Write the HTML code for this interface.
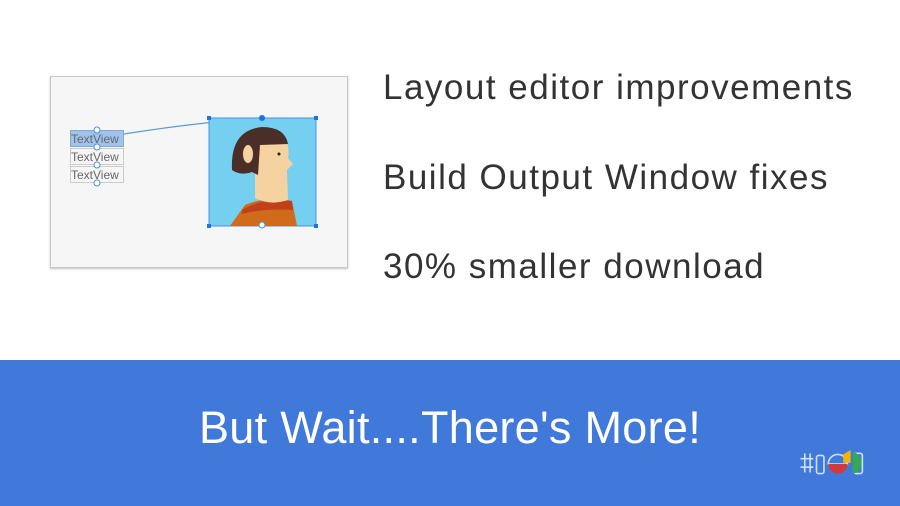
<!DOCTYPE html>
<html><head><style>
html,body{margin:0;padding:0;}
body{width:900px;height:506px;background:#fff;position:relative;overflow:hidden;font-family:"Liberation Sans",sans-serif;}
.card{position:absolute;left:50px;top:76px;width:296px;height:190px;background:#f5f6f5;border:1px solid #c8c8c8;box-shadow:0 1px 2px rgba(0,0,0,.25);}
.t{position:absolute;left:383px;font-size:35px;color:#333;white-space:nowrap;letter-spacing:1.5px;}
.band{position:absolute;left:0;top:360px;width:900px;height:146px;background:#4179db;}
.tv{position:absolute;left:70px;width:54px;height:17px;font-size:12px;color:#666;border:1px solid #ccc;line-height:17px;box-sizing:border-box;}
</style></head><body>
<div class="card"></div>
<div class="tv" style="top:130px;background:#9fc3ef;border-color:#8ab;">TextView</div>
<div class="tv" style="top:148px;">TextView</div>
<div class="tv" style="top:166px;">TextView</div>
<svg style="position:absolute;left:0;top:0" width="900" height="360">
<path d="M124 134 Q200 122 262 118" stroke="#5b9bd5" stroke-width="1.2" fill="none"/>
<rect x="209" y="118" width="107" height="108" fill="#75cff0" stroke="#4a90e2" stroke-width="1"/>
<path d="M230 226 L245 205 Q265 196 292 201 L297 226 Z" fill="#cf6b1a"/>
<path d="M242 210 Q265 196 292 201 L293 210 Q265 208 242 214 Z" fill="#c1401a"/>
<path d="M255 140 L285 136 Q290 150 288 158 L293 164 L287 170 L288 200 Q270 206 255 198 L255 175 Z" fill="#f5d3a1"/>
<path d="M232 170 Q230 130 262 127 Q285 127 288 144 L260 145 L258 175 L252 172 Q240 176 232 170 Z" fill="#4a2e28"/>
<ellipse cx="248" cy="154" rx="5" ry="9" fill="#f5d3a1"/>
<circle cx="279" cy="154" r="1.5" fill="#222"/>
<g fill="#1a73e8"><rect x="207" y="116" width="4" height="4"/><rect x="314" y="116" width="4" height="4"/><rect x="207" y="224" width="4" height="4"/><rect x="314" y="224" width="4" height="4"/><circle cx="262" cy="118" r="3"/></g>
<circle cx="262" cy="225" r="3" fill="#fff" stroke="#4a90e2"/>
<g fill="#fff" stroke="#4a90e2"><circle cx="97" cy="130" r="3"/><circle cx="97" cy="147" r="3"/><circle cx="97" cy="165" r="3"/><circle cx="97" cy="183" r="3"/></g>
</svg>
<div class="t" style="top:68px">Layout editor improvements</div>
<div class="t" style="top:158px">Build Output Window fixes</div>
<div class="t" style="top:247px">30% smaller download</div>
<div class="band"></div>
<div style="position:absolute;left:0;width:900px;top:402px;text-align:center;color:#fff;font-size:45px;letter-spacing:0.3px;">But Wait....There's More!</div>
<svg style="position:absolute;left:795px;top:448px" width="75" height="32" viewBox="0 0 70 30">
<g stroke="#cfe0fb" stroke-width="1.5" fill="none"><path d="M5 10h12M5 18h12M9 5v18M14 5v18"/><rect x="20" y="7" width="7" height="17" rx="2"/><rect x="55" y="5" width="8" height="19" rx="2"/></g>
<path d="M31 15 a9 9 0 0 1 18 0 Z" fill="none" stroke="#cfe0fb" stroke-width="1.5"/>
<path d="M31 15 h18 a9 9 0 0 1 -18 0Z" fill="#d23a3a"/>
<path d="M45 6 L52 2 L52 14 L45 14 Z" fill="#f5b400"/>
<path d="M54 4 a8 10 0 0 1 0 20 Z" fill="#35a853"/>
</svg>
</body></html>
